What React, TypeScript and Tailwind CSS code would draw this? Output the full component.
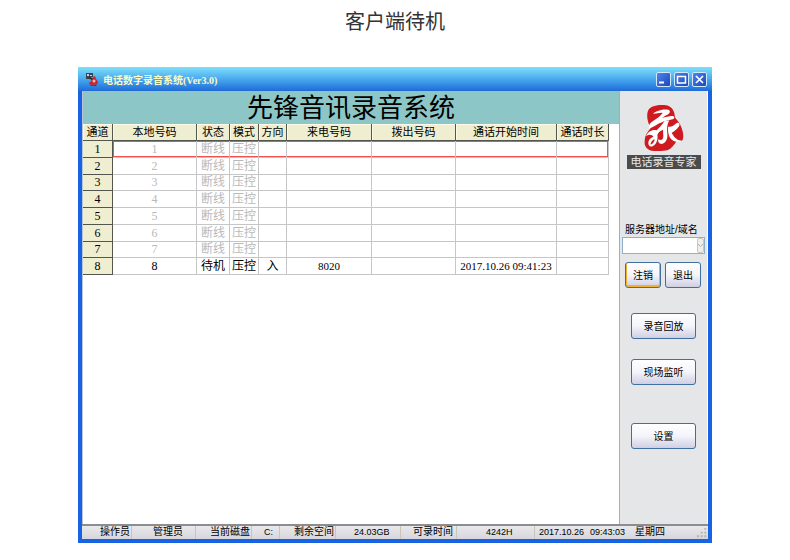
import { ReactNode } from 'react'
import clsx from 'clsx'

const columns = [
  { title: '通道', width: 'w-[30px]' },
  { title: '本地号码', width: 'w-[84px]' },
  { title: '状态', width: 'w-[33px]' },
  { title: '模式', width: 'w-[29px]' },
  { title: '方向', width: 'w-[28px]' },
  { title: '来电号码', width: 'w-[85px]' },
  { title: '拨出号码', width: 'w-[84px]' },
  { title: '通话开始时间', width: 'w-[101px]' },
  { title: '通话时长', width: 'w-[52px]' },
]

const offline = (no: string) => [no, '断线', '压控', '', '', '', '', '']

const rows = [
  offline('1'),
  offline('2'),
  offline('3'),
  offline('4'),
  offline('5'),
  offline('6'),
  offline('7'),
  ['8', '待机', '压控', '入', '8020', '', '2017.10.26 09:41:23', ''],
]

const status = [
  { text: '操作员', className: 'w-[50px] pl-[18px]' },
  { text: '管理员', className: 'w-16 pl-[21px]' },
  { text: '当前磁盘', className: 'w-14 pl-3.5' },
  { text: 'C:', className: 'w-7 pl-3 text-[9px]' },
  { text: '剩余空间', className: 'w-14 pl-3.5' },
  { text: '24.03GB', className: 'w-[65px] pl-[18px] text-[9px]' },
  { text: '可录时间', className: 'w-14 pl-3' },
  { text: '4242H', className: 'w-[78px] pl-[29px] text-[9px]' },
]

const Logo = () => (
  <svg viewBox="0 0 180 168" className="h-14 w-[60px]" aria-hidden="true">
    <path
      fill="#cf1b20"
      d="M43 30C50 18 70 14 90 15C106 16 115 23 120 36C123 43 121 48 124 54C136 66 144 82 147 98C149 110 147 119 144 122C136 121 131 122 127 124C121 135 113 145 102 150C88 154 66 154 52 152C42 149 33 141 32 131C31 118 34 105 41 96C47 89 51 86 49 79C41 70 36 44 43 30Z"
    />
    <g fill="#fff">
      <path d="M57 41C67 32 88 26 103 29C111 32 108 40 98 45L84 53L111 48C121 47 125 53 116 58C98 62 78 67 66 76L46 86C44 78 46 72 52 67C60 60 70 56 78 48L86 39C76 37 65 43 57 41Z" />
      <path d="M91 64L106 61C99 72 98 86 100 101C102 116 95 129 83 132C75 132 71 125 73 118C82 123 88 118 88 109L87 89C78 92 73 97 70 104C73 119 67 132 57 138C48 143 42 137 43 127C44 119 50 113 58 110C54 103 46 102 36 108C42 94 57 87 68 91C74 84 84 76 91 64Z" />
      <path d="M102 80C113 82 119 77 128 69C135 66 140 74 134 80C128 88 120 94 113 98C119 110 128 120 142 123C128 128 116 124 108 113C103 104 101 91 102 80Z" />
    </g>
    <path fill="#cf1b20" d="M50 130C54 122 58 118 62 118C61 126 57 132 50 134Z" />
  </svg>
)

const AppIcon = () => (
  <svg viewBox="0 0 14 14" className="size-3.5" aria-hidden="true">
    <path d="M1 1h7v4H6v2H1z" fill="#39434b" />
    <path d="M2 2h2v2H2zM5 3h2v1H5z" fill="#c9d6dc" />
    <path d="M5 5l4 2-1 2-4-3z" fill="#22252c" />
    <path d="M8 5l2-1 1 3 2 3c0 2-2 3-5 3s-4-1-4-2l3-3z" fill="#c9252c" />
    <circle cx="9" cy="9" r="1.5" fill="#f4b9b5" />
    <path d="M4 12c2 2 6 2 8 0l-1 2H6z" fill="#521820" />
  </svg>
)

const CaptionButton = ({ label, children }: { label: string; children: ReactNode }) => (
  <button
    type="button"
    aria-label={label}
    className="flex size-[15px] items-center justify-center rounded-[2px] border border-[#d5e8fb] bg-linear-to-br from-[#4f86e8] to-[#1c46bd]"
  >
    <svg viewBox="0 0 13 13" className="size-[13px]" fill="none" stroke="#fff">
      {children}
    </svg>
  </button>
)

const Button = ({
  children,
  active,
  className,
}: {
  children: ReactNode
  active?: boolean
  className?: string
}) => (
  <button
    type="button"
    className={clsx(
      'h-[26px] rounded-[3px] border border-[#3f6f9f] bg-linear-to-b from-white via-[#f4f4fb] to-[#cfcfe2] text-[10px] text-black',
      active && 'shadow-[inset_0_-1px_0_1px_#f0b030]',
      className
    )}
  >
    {children}
  </button>
)

const ChannelTable = () => (
  <table className="h-[151px] w-full table-fixed border-separate border-spacing-0 text-center text-[11px] leading-3 font-normal">
    <colgroup>
      {columns.map((col) => (
        <col key={col.title} className={col.width} />
      ))}
    </colgroup>
    <thead>
      <tr className="h-[17px]">
        {columns.map((col) => (
          <th
            key={col.title}
            scope="col"
            className="border-r border-b border-[#53564d] bg-[#f0eed0] p-0 font-normal whitespace-nowrap shadow-[inset_1px_1px_0_#fbfae9]"
          >
            {col.title}
          </th>
        ))}
      </tr>
    </thead>
    <tbody className="font-['Liberation_Serif','Noto_Sans_CJK_SC',serif]">
      {rows.map((row, i) => (
        <tr key={row[0]} className={clsx('h-4', i < 7 ? 'text-[#b9b9b9]' : 'text-black')}>
          <th
            scope="row"
            className="border-r border-b border-[#53564d] bg-[#f0eed0] p-0 text-[12px] font-normal text-black"
          >
            {i + 1}
          </th>
          {row.map((cell, j) => (
            <td
              key={j}
              className={clsx(
                'relative border-r border-b border-[#c6c6c6] p-0 whitespace-nowrap',
                j < 4 && 'text-[12px]',
                // selection frame around the current channel
                i === 0 && 'after:absolute after:inset-0 after:border-y after:border-[#f4504c]',
                i === 0 && j === 0 && 'after:border-l',
                i === 0 && j === 7 && 'after:border-r'
              )}
            >
              {cell}
            </td>
          ))}
        </tr>
      ))}
    </tbody>
  </table>
)

export default function App() {
  return (
    <div className="min-h-screen bg-white px-[78px] pb-4 font-['Liberation_Sans','Noto_Sans_CJK_SC',sans-serif] text-black">
      <h1 className="pt-[7px] pb-[30px] text-center text-[20px] leading-[30px] text-[#333]">
        客户端待机
      </h1>
      <div className="bg-[#1763e4]">
        <header className="flex h-6 items-center bg-linear-to-b from-[#7fe0fb] via-[#49a9ee] to-[#1f6bd8] pr-[5px] pl-[7px]">
          <AppIcon />
          <h2 className="ml-1 flex-1 pt-1 font-['Liberation_Serif','Noto_Sans_CJK_SC',serif] text-[10px] leading-4 font-bold text-[#fbfbc4]">
            电话数字录音系统(Ver3.0)
          </h2>
          <div className="flex gap-[3px]">
            <CaptionButton label="最小化">
              <path d="M2 9.5h5" strokeWidth="2" />
            </CaptionButton>
            <CaptionButton label="最大化">
              <path d="M2.5 3.5h8v6.5h-8z" strokeWidth="1.5" />
            </CaptionButton>
            <CaptionButton label="关闭">
              <path d="M3 3l7 7M10 3l-7 7" strokeWidth="1.7" />
            </CaptionButton>
          </div>
        </header>
        <div className="px-1 pb-1">
          <div className="flex min-h-[433px] border-l border-[#b8c4d4] bg-white">
            <main className="flex-1">
              <div className="bg-[#8dc6c6] pt-px text-center text-[26px] leading-8">
                先锋音讯录音系统
              </div>
              <div className="pr-2.5">
                <ChannelTable />
              </div>
            </main>
            <aside className="flex w-[89px] flex-col border-r border-l border-r-white border-l-[#a9adb0] bg-[#e5e6e8]">
              <div className="flex flex-col items-center pt-[9px]">
                <Logo />
                <div className="-mt-px bg-[#4b4b4b] px-1 text-[11px] leading-[14px] text-[#e8e8e8]">
                  电话录音专家
                </div>
              </div>
              <label
                htmlFor="server"
                className="mt-[54px] pl-[5px] text-[10px] leading-[14px] whitespace-nowrap"
              >
                服务器地址/域名
              </label>
              <div className="mx-0.5 flex h-[17px] border border-[#8fb0cc] bg-white">
                <input id="server" type="text" className="min-w-0 flex-1 px-1 text-[10px] outline-none" />
                <svg viewBox="0 0 7 15" className="h-[15px] w-[7px]" fill="none" aria-hidden="true">
                  <rect x="0.5" y="0.5" width="6" height="14" rx="1.5" fill="#efeeea" stroke="#c9c7bf" />
                  <path d="M1 6l2.5 2.5L6 6" stroke="#b5b3aa" />
                </svg>
              </div>
              <div className="mt-2 flex gap-1 pl-[5px]">
                <Button active className="w-9">
                  注销
                </Button>
                <Button className="w-9">退出</Button>
              </div>
              <div className="flex flex-col items-center pt-[25px]">
                <Button className="w-[65px]">录音回放</Button>
                <Button className="mt-5 w-[65px]">现场监听</Button>
                <Button className="mt-[38px] w-[65px]">设置</Button>
              </div>
            </aside>
          </div>
          <footer className="flex h-[15px] border-t-2 border-[#8b8d90] bg-linear-to-b from-[#e9e9ec] to-[#d6d6dc] text-[10px] leading-3 whitespace-nowrap">
            {status.map((item) => (
              <span
                key={item.text}
                className={clsx('shrink-0 border-r border-[#c9c6b8]', item.className)}
              >
                {item.text}
              </span>
            ))}
            <span className="pl-1 text-[9px]">2017.10.26</span>
            <span className="pl-1.5 text-[9px]">09:43:03</span>
            <span className="flex-1 pl-2.5">星期四</span>
            <svg viewBox="0 0 12 12" className="mt-0.5 size-[11px]" fill="#b5b3a8" aria-hidden="true">
              <path d="M8 0h2v2H8zM8 4h2v2H8zM4 4h2v2H4zM8 8h2v2H8zM4 8h2v2H4zM0 8h2v2H0z" />
            </svg>
          </footer>
        </div>
      </div>
    </div>
  )
}
